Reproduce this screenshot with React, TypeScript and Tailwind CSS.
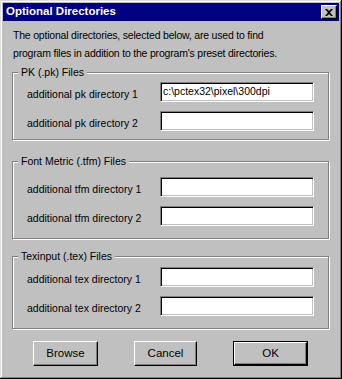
import React from 'react';

const font = "font-['Liberation_Sans',Arial,sans-serif]";

const Field = ({ label, value }: { label: string; value?: string }) => (
    <div className="flex items-start h-[20px]">
        <span className="w-[147px] pl-[14px] mt-[6px] leading-[13px] whitespace-nowrap">{label}</span>
        <div className="w-[154px] h-[20px] bg-white border border-t-[#808080] border-l-[#808080] border-b-white border-r-white shadow-[inset_1px_1px_#000,inset_-1px_-1px_#c0c0c0] pl-[2px] leading-[17px] overflow-hidden whitespace-nowrap">
            {value}
        </div>
    </div>
);

const Group = ({ title, pad, children }: { title: string; pad: string; children: React.ReactNode }) => (
    <div className={`relative ml-[9px] w-[317px] border border-[#808080] shadow-[1px_1px_0_#fff,inset_1px_1px_0_#fff] flex flex-col gap-[9px] ${pad}`}>
        <span className="absolute -top-[7px] left-[5px] px-[3px] bg-[#c0c0c0] leading-[13px] whitespace-nowrap">{title}</span>
        {children}
    </div>
);

const Button = ({ label, w, isDefault }: { label: string; w: string; isDefault?: boolean }) => (
    <div className={`${w} h-[25px] ${isDefault ? 'border border-black' : ''}`}>
        <div className="w-full h-full flex items-center justify-center border border-t-white border-l-white border-b-black border-r-black shadow-[inset_-1px_-1px_#808080]">
            {label}
        </div>
    </div>
);

export default function App() {
    return (
        <div className={`w-[342px] h-[379px] bg-[#c0c0c0] p-[3px] text-[10.5px] text-black ${font} shadow-[inset_-1px_-1px_#000,inset_1px_1px_#dfdfdf,inset_-2px_-2px_#808080,inset_2px_2px_#fff] flex flex-col`}>
            {/* title bar */}
            <div className="h-[18px] bg-[#000080] flex items-center justify-between pl-[3px] pr-[2px]">
                <span className="text-white font-bold text-[11.5px] leading-none">Optional Directories</span>
                <div className="w-[16px] h-[14px] bg-[#c0c0c0] border border-t-white border-l-white border-b-black border-r-black shadow-[inset_-1px_-1px_#808080] flex items-center justify-center">
                    <svg width="8" height="7" viewBox="0 0 8 7">
                        <path d="M0 0h2l2 2 2-2h2L5 3.5 8 7H6L4 5 2 7H0l3-3.5z" fill="#000" />
                    </svg>
                </div>
            </div>

            <p className="mt-[5px] ml-[10px] leading-[18px] tracking-[-0.2px]">
                The optional directories, selected below, are used to find<br />
                program files in addition to the program's preset directories.
            </p>

            <div className="mt-[10px]">
                <Group title="PK (.pk) Files" pad="pt-[9px] pb-[8px]">
                    <Field label="additional pk directory 1" value="c:\pctex32\pixel\300dpi" />
                    <Field label="additional pk directory 2" />
                </Group>
            </div>

            <div className="mt-[21px]">
                <Group title="Font Metric (.tfm) Files" pad="pt-[15px] pb-[12px]">
                    <Field label="additional tfm directory 1" />
                    <Field label="additional tfm directory 2" />
                </Group>
            </div>

            <div className="mt-[17px]">
                <Group title="Texinput (.tex) Files" pad="pt-[10px] pb-[12px]">
                    <Field label="additional tex directory 1" />
                    <Field label="additional tex directory 2" />
                </Group>
            </div>

            <div className="mt-[12px] ml-[30px] flex gap-[36px] text-[11.5px]">
                <Button label="Browse" w="w-[65px]" />
                <Button label="Cancel" w="w-[63px]" />
                <Button label="OK" w="w-[75px]" isDefault />
            </div>
        </div>
    );
}
